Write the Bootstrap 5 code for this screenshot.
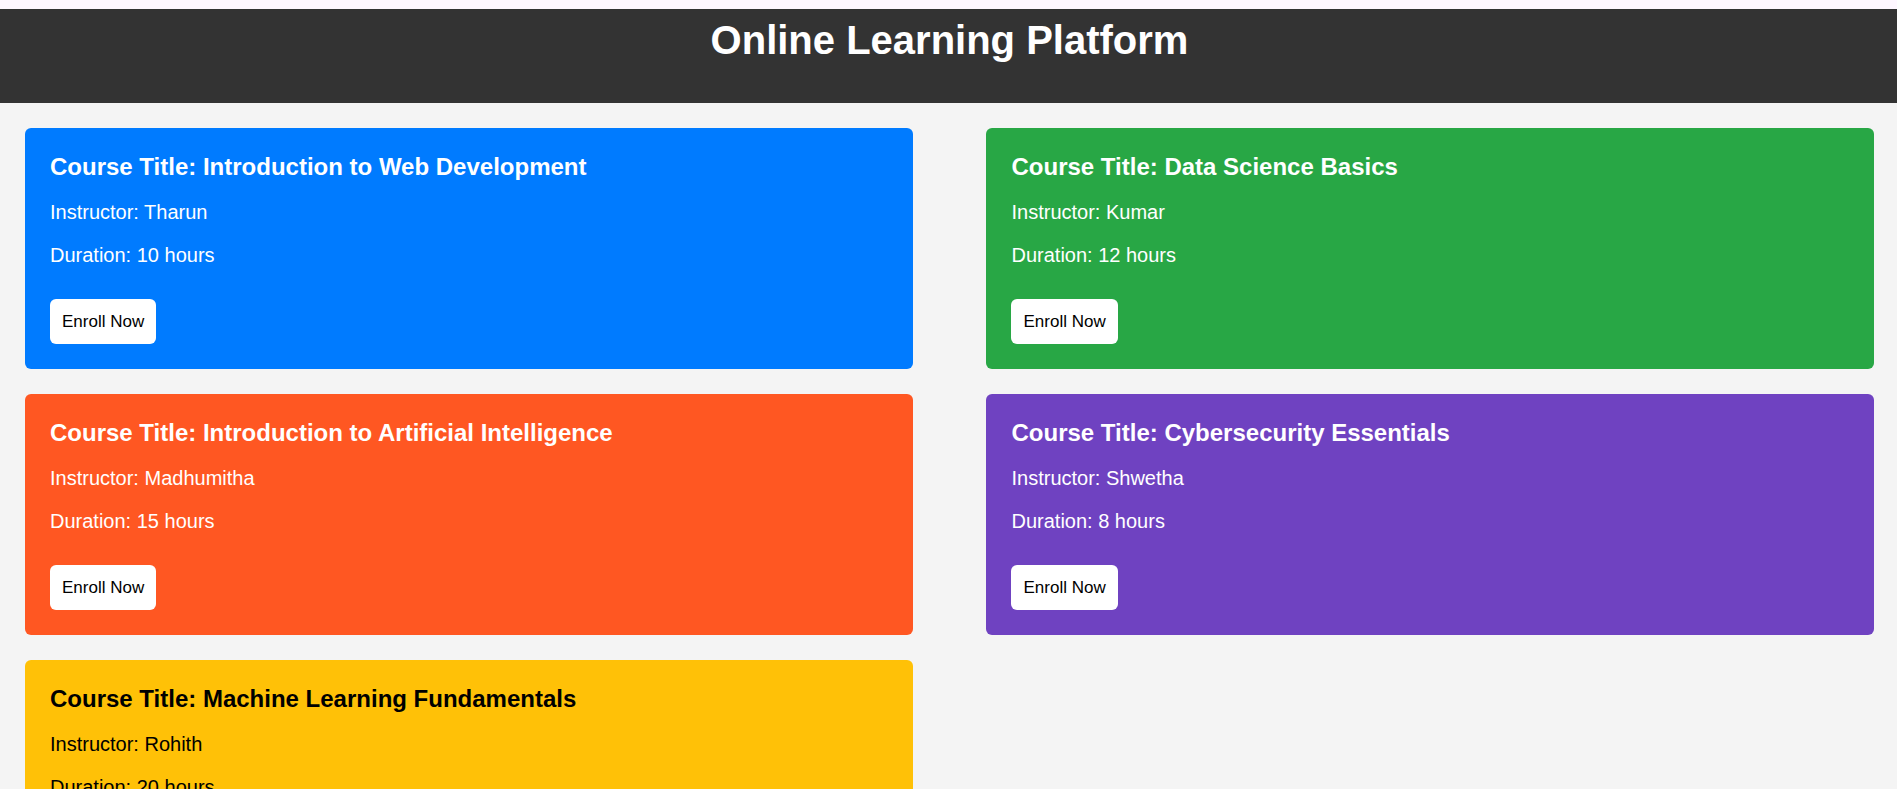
<!DOCTYPE html>
<html lang="en">
<head>
<meta charset="utf-8">
<meta name="viewport" content="width=device-width, initial-scale=1">
<title>Online Learning Platform</title>
<link href="https://cdn.jsdelivr.net/npm/bootstrap@5.3.0/dist/css/bootstrap.min.css" rel="stylesheet">
<style>
  body {
    font-family: "Liberation Sans", Arial, sans-serif;
    background-color: #f4f4f4;
    border-top: 9px solid #fef7ff;
  }
  .site-header { background-color: #333; padding: 8px 23px 40px 25px; }
  .site-header h1 { font-size: 40px; line-height: 46px; }
  .course-list { padding: 25px 23px 25px 25px; row-gap: 25px; }
  .course {
    width: 48%;
    padding: 25px;
    border: 0;
    border-radius: 6px;
    color: #fff;
  }
  .course h2 { font-size: 24px; line-height: 28px; margin-bottom: 20px; }
  .course p { font-size: 20px; line-height: 23px; margin-bottom: 20px; }
  .course .btn {
    --bs-btn-color: #000;
    --bs-btn-bg: #fff;
    --bs-btn-hover-bg: #eee;
    margin-top: 12px;
    padding: 12px;
    border: 0;
    border-radius: 6px;
    font-size: 17px;
    line-height: 21px;
  }
  .course-web { background-color: #007bff; }
  .course-data { background-color: #28a745; }
  .course-ai { background-color: #ff5722; }
  .course-security { background-color: #6f42c1; }
  .course-ml { background-color: #ffc107; color: #000; }
  @media (max-width: 767px) { .course { width: 100%; } }
</style>
</head>
<body>
<header class="site-header text-center text-white">
  <h1 class="fw-bold m-0">Online Learning Platform</h1>
</header>
<main class="course-list d-flex flex-wrap justify-content-between">
  <article class="card course course-web align-items-start">
    <h2 class="fw-bold">Course Title: Introduction to Web Development</h2>
    <p>Instructor: Tharun</p>
    <p>Duration: 10 hours</p>
    <button type="button" class="btn">Enroll Now</button>
  </article>
  <article class="card course course-data align-items-start">
    <h2 class="fw-bold">Course Title: Data Science Basics</h2>
    <p>Instructor: Kumar</p>
    <p>Duration: 12 hours</p>
    <button type="button" class="btn">Enroll Now</button>
  </article>
  <article class="card course course-ai align-items-start">
    <h2 class="fw-bold">Course Title: Introduction to Artificial Intelligence</h2>
    <p>Instructor: Madhumitha</p>
    <p>Duration: 15 hours</p>
    <button type="button" class="btn">Enroll Now</button>
  </article>
  <article class="card course course-security align-items-start">
    <h2 class="fw-bold">Course Title: Cybersecurity Essentials</h2>
    <p>Instructor: Shwetha</p>
    <p>Duration: 8 hours</p>
    <button type="button" class="btn">Enroll Now</button>
  </article>
  <article class="card course course-ml align-items-start">
    <h2 class="fw-bold">Course Title: Machine Learning Fundamentals</h2>
    <p>Instructor: Rohith</p>
    <p>Duration: 20 hours</p>
    <button type="button" class="btn">Enroll Now</button>
  </article>
</main>
<script src="https://cdn.jsdelivr.net/npm/bootstrap@5.3.0/dist/js/bootstrap.bundle.min.js"></script>
</body>
</html>
